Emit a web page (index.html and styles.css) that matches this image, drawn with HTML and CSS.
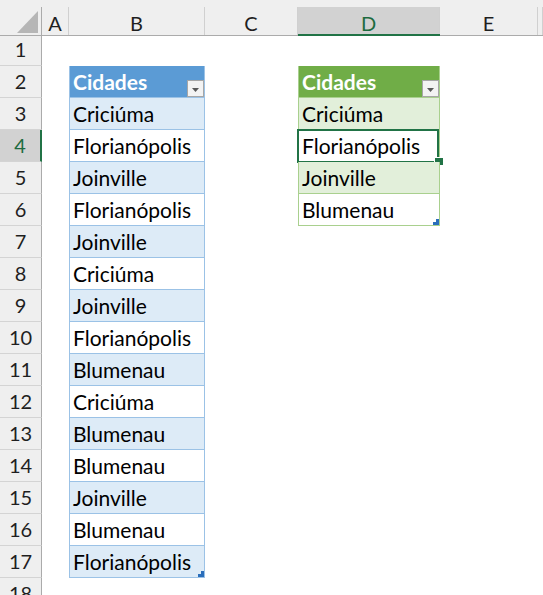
FILE: index.html
```html
<!DOCTYPE html>
<html lang="pt-BR">
<head>
<meta charset="utf-8">
<title>Planilha</title>
<link rel="stylesheet" href="styles.css">
</head>
<body>
<div class="sheet">
  <div class="corner"><div class="corner-in"><span class="tri"></span></div></div>
  <div class="ch"><span>A</span></div>
  <div class="ch"><span>B</span></div>
  <div class="ch"><span>C</span></div>
  <div class="ch sel"><span>D</span></div>
  <div class="ch"><span>E</span></div>
  <div class="ch"><span></span></div>

  <div class="rh r1">1</div>
  <div class="rh r2">2</div>
  <div class="rh r3">3</div>
  <div class="rh r4 sel">4</div>
  <div class="rh r5">5</div>
  <div class="rh r6">6</div>
  <div class="rh r7">7</div>
  <div class="rh r8">8</div>
  <div class="rh r9">9</div>
  <div class="rh r10">10</div>
  <div class="rh r11">11</div>
  <div class="rh r12">12</div>
  <div class="rh r13">13</div>
  <div class="rh r14">14</div>
  <div class="rh r15">15</div>
  <div class="rh r16">16</div>
  <div class="rh r17">17</div>
  <div class="rh r18">18</div>

  <div class="tbl blue">
    <div class="cell hd">Cidades<span class="flt"><svg width="7" height="4" viewBox="0 0 7 4"><polygon points="0,0 7,0 3.5,4" fill="#595959"/></svg></span></div>
    <div class="cell band">Criciúma</div>
    <div class="cell">Florianópolis</div>
    <div class="cell band">Joinville</div>
    <div class="cell">Florianópolis</div>
    <div class="cell band">Joinville</div>
    <div class="cell">Criciúma</div>
    <div class="cell band">Joinville</div>
    <div class="cell">Florianópolis</div>
    <div class="cell band">Blumenau</div>
    <div class="cell">Criciúma</div>
    <div class="cell band">Blumenau</div>
    <div class="cell">Blumenau</div>
    <div class="cell band">Joinville</div>
    <div class="cell">Blumenau</div>
    <div class="cell band">Florianópolis</div>
    <span class="rsz"></span>
  </div>

  <div class="tbl green">
    <div class="cell hd">Cidades<span class="flt"><svg width="7" height="4" viewBox="0 0 7 4"><polygon points="0,0 7,0 3.5,4" fill="#595959"/></svg></span></div>
    <div class="cell band">Criciúma</div>
    <div class="cell active">Florianópolis</div>
    <div class="cell band">Joinville</div>
    <div class="cell">Blumenau</div>
    <span class="rsz"></span>
  </div>
</div>
</body>
</html>
```

FILE: styles.css
```css
* { box-sizing: border-box; }
html, body { margin: 0; padding: 0; background: #ffffff; }
body {
  width: 543px;
  height: 595px;
  overflow: hidden;
  font-family: Lato, "Open Sans", sans-serif;
}
.sheet {
  display: grid;
  grid-template-columns: 42px 27px 136px 93px 142px 98px 1fr;
  grid-template-rows: 36px 30px repeat(17, 32px);
}

/* corner */
.corner {
  background: #efefef;
  border-bottom: 1px solid #ababab;
  padding-top: 7px;
}
.corner-in {
  position: relative;
  height: 100%;
  border-right: 1px solid #ababab;
}
.tri {
  position: absolute;
  right: 3px;
  bottom: 2px;
  width: 21px;
  height: 22px;
  background: #b6b6b6;
  clip-path: polygon(100% 0, 100% 100%, 0 100%);
}

/* column headers */
.ch {
  background: #efefef;
  border-bottom: 1px solid #ababab;
  padding-top: 7px;
}
.ch span {
  display: flex;
  justify-content: center;
  height: 100%;
  padding-top: 4px;
  border-right: 1px solid #d0d0d0;
  font-size: 20px;
  line-height: 25px;
  color: #1f1f1f;
}
.ch.sel { border-bottom: 2px solid #217346; }
.ch.sel span { background: #d2d2d2; color: #1d6b40; }

/* row headers */
.rh {
  grid-column: 1;
  display: flex;
  justify-content: center;
  align-items: flex-end;
  padding-bottom: 3px;
  background: #efefef;
  border-right: 1px solid #ababab;
  border-bottom: 1px solid #d4d4d4;
  font-size: 20px;
  line-height: 25px;
  color: #1f1f1f;
}
.rh.sel {
  background: #d2d2d2;
  border-right: 2px solid #217346;
  color: #1d6b40;
}

/* tables */
.tbl {
  position: relative;
  display: flex;
  flex-direction: column;
  grid-row: 3 / span 16;
}
.tbl.blue { grid-column: 3; }
.tbl.green { grid-column: 5; grid-row: 3 / span 5; }

.cell {
  position: relative;
  flex: none;
  height: 32px;
  display: flex;
  align-items: flex-end;
  padding: 0 0 3px 3px;
  border-left: 1px solid;
  border-right: 1px solid;
  border-bottom: 1px solid;
  font-size: 21px;
  line-height: 25px;
  color: #000000;
  white-space: nowrap;
}
.blue .cell { border-color: #9bc2e6; }
.blue .cell.band { background: #ddebf7; }
.blue .cell.hd { background: #5b9bd5; }
.green .cell { border-color: #a9d08e; }
.green .cell.band { background: #e2efda; }
.green .cell.hd { background: #70ad47; }

.cell.hd {
  color: #ffffff;
  font-weight: 700;
}
.flt {
  margin-left: auto;
  margin-bottom: -3px;
  width: 17px;
  height: 17px;
  display: flex;
  align-items: center;
  justify-content: center;
  padding-top: 2px;
  background: #f3f3f3;
  border: 1px solid #a6a6a6;
}
.flt svg { display: block; }

.rsz {
  position: absolute;
  right: 1px;
  bottom: 1px;
  width: 6px;
  height: 6px;
  background: #2a6ebb;
  clip-path: polygon(50% 0, 100% 0, 100% 100%, 0 100%, 0 50%, 50% 50%);
}

/* active cell */
.cell.active::before {
  content: "";
  position: absolute;
  top: -1px;
  left: -2px;
  right: 0;
  bottom: -2px;
  border: 2px solid #217346;
}
.cell.active::after {
  content: "";
  position: absolute;
  right: -4px;
  bottom: -4px;
  width: 8px;
  height: 7px;
  background: #217346;
  border-left: 1px solid #ffffff;
  border-top: 1px solid #ffffff;
}
```
